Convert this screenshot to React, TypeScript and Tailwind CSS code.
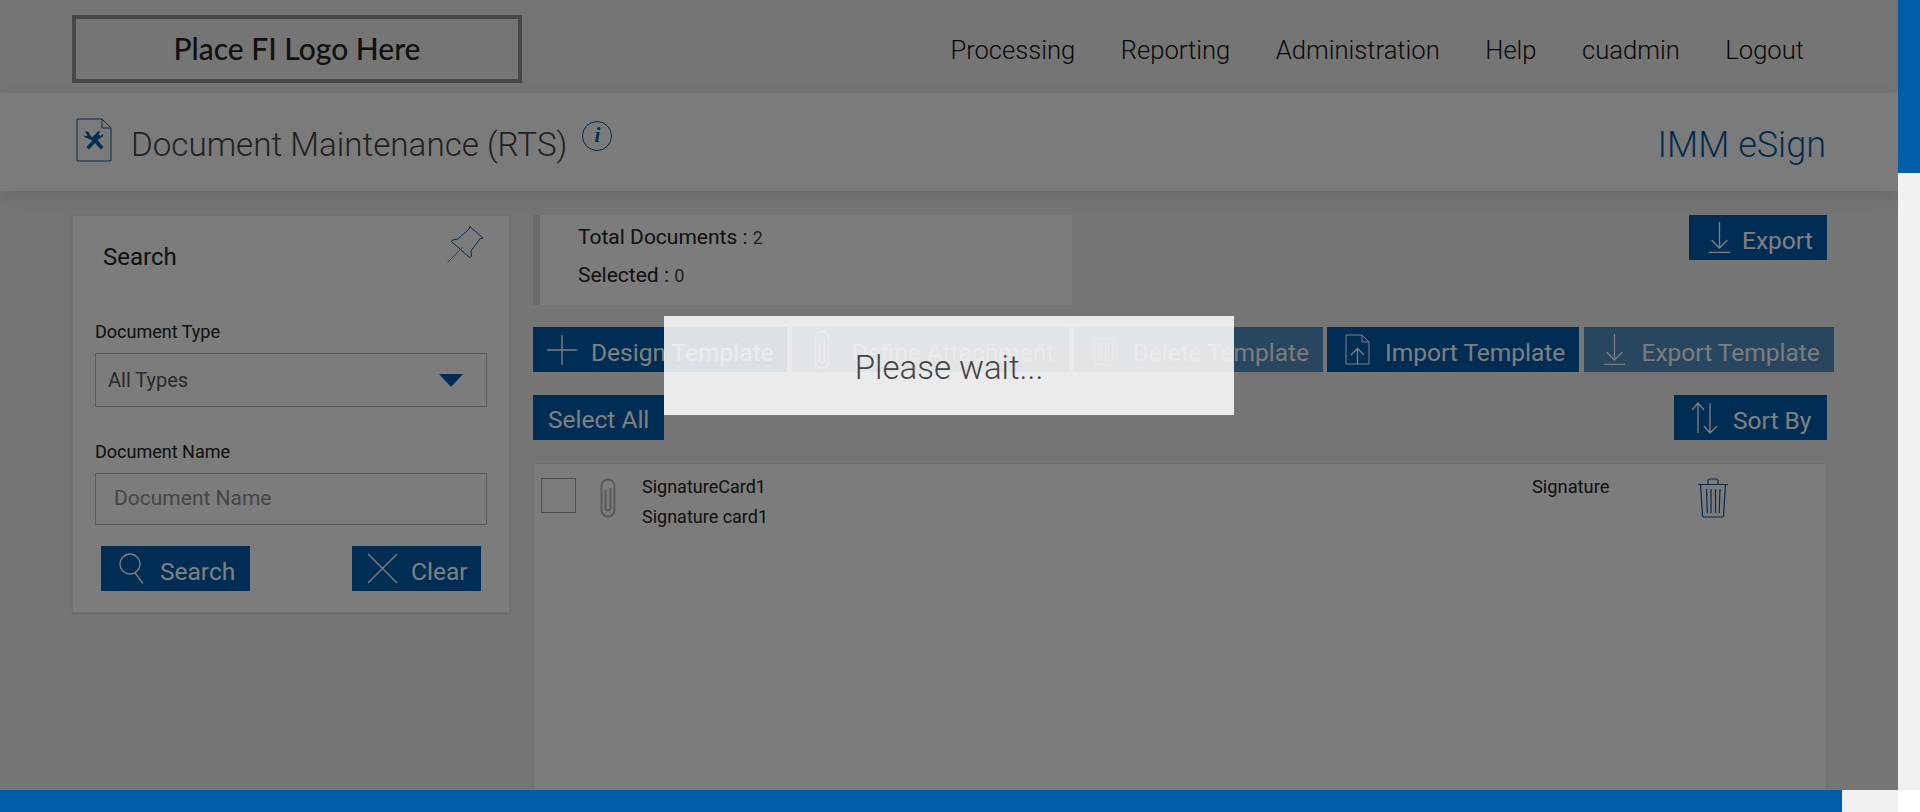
import React from "react";

const navItems = ["Processing", "Reporting", "Administration", "Help", "cuadmin", "Logout"];

function PlusIcon() {
  return (
    <svg width="32" height="32" viewBox="0 0 32 32" fill="none" stroke="currentColor" strokeWidth="1.3">
      <path d="M16 1v30M1 16h30" />
    </svg>
  );
}

function ClipIcon({ className, weight = 1.5 }: { className?: string; weight?: number }) {
  return (
    <svg width="16" height="40" viewBox="0 0 16 40" fill="none" stroke="currentColor" strokeWidth={weight} className={className}>
      <path d="M1.500 8a6.500 6.500 0 0 1 13 0v24a6.500 6.500 0 0 1-13 0z" />
      <path d="M5.500 12v18a2.500 2.500 0 0 0 5 0V10" />
    </svg>
  );
}

function TrashIcon({ className, size = 32 }: { className?: string; size?: number }) {
  return (
    <svg width={size} height={size * 1.25} viewBox="0 0 32 40" fill="none" stroke="currentColor" strokeWidth="1.2" className={className}>
      <path d="M1 6.500h30M11 6.500V3c0-1 .8-2 2-2h6c1.200 0 2 1 2 2v3.500M3.500 6.500l2 31c0 .8.800 1.500 1.500 1.500h18c.8 0 1.500-.7 1.500-1.500l2-31" />
      <path d="M9.500 11l.8 24M14 11v24M18.500 11v24M23 11l-.8 24" />
    </svg>
  );
}

function DownloadIcon() {
  return (
    <svg width="23" height="31" viewBox="0 0 23 31" fill="none" stroke="currentColor" strokeWidth="1.3">
      <path d="M11.500 0v26M3.500 18l8 8 8-8M1 30.400h21" />
    </svg>
  );
}

function DocUpIcon() {
  return (
    <svg width="25" height="31" viewBox="0 0 25 31" fill="none" stroke="currentColor" strokeWidth="1">
      <path d="M1 1h16l7 7v22H1zM17 1v7h7" />
      <path d="M12.500 30V15M6 21l6.500-6.500L19 21" strokeWidth="1.300" />
    </svg>
  );
}

function SortIcon() {
  return (
    <svg width="27" height="32" viewBox="0 0 27 32" fill="none" stroke="currentColor" strokeWidth="1.3">
      <path d="M7 31V1M1 8l6-7 6 7M19 1v30M13 24l6 7 7-7" />
    </svg>
  );
}

function SearchIcon() {
  return (
    <svg width="25" height="31" viewBox="0 0 25 31" fill="none" stroke="currentColor" strokeWidth="1.3">
      <circle cx="11" cy="11" r="10" />
      <path d="M16 20l8 10.500" />
    </svg>
  );
}

function CloseIcon() {
  return (
    <svg width="31" height="31" viewBox="0 0 31 31" fill="none" stroke="currentColor" strokeWidth="1.3">
      <path d="M1 1l29 29M30 1L1 30" />
    </svg>
  );
}

function PinIcon() {
  return (
    <svg width="37" height="37" viewBox="0 0 37 37" fill="none" stroke="#0a5a9e" strokeWidth="1">
      <path d="M0.500 36.500L16 21" strokeWidth="0.7" />
      <path d="M5.500 14l5.500-1 11-10 .8-2.500L36 12l-3 .8-9 12 .5 5.500-1.500 1.500L4.500 15.500z" />
    </svg>
  );
}

function DocToolIcon() {
  return (
    <svg width="36" height="44" viewBox="0 0 36 44" fill="none" className="ml-[4px] shrink-0">
      <path d="M1 1h25l9 9v33H1zM26 1v9h9" stroke="#0a5a9e" strokeWidth="1" />
      <path d="M9 14c2-1 4 0 4.500 2l2.500 3.500 5-5c.5-1 2-1.500 3.500-1l-2 2.500 2 2 2.500-2c.5 1.500 0 3-2 3.500l-3.500 2.500 6 7-2.500 2.500-6-6.500-6 6.500-2.500-2.500 6-6.500L11 20c-2 0-3.500-1.500-3.500-3l2.500 1.500 1.500-1.500z" fill="#005aa8" />
    </svg>
  );
}

function InfoIcon() {
  return (
    <div className="flex h-[30px] w-[30px] items-center justify-center rounded-full border border-[#0a5a9e] font-['Liberation_Serif',serif] text-[21px] font-bold italic text-[#005aa8]">
      i
    </div>
  );
}

function ActionButton({
  icon,
  label,
  className,
  gap,
}: {
  icon: React.ReactNode;
  label: string;
  className: string;
  gap: string;
}) {
  return (
    <div className={`flex h-[45px] shrink-0 items-center bg-[#005aa8] text-white ${className} ${gap}`}>
      <span className="flex shrink-0 items-center">{icon}</span>
      <span className="whitespace-nowrap pt-[8px] text-[24.500px] leading-none">{label}</span>
    </div>
  );
}

function SearchPanel() {
  return (
    <div className="h-[398px] w-[438px] shrink-0 border border-[#e2e2e2] bg-[#f8f8f8] shadow-sm">
      <div className="flex items-start justify-between pl-[30px] pr-[25px] pt-[10px]">
        <div className="pt-[16px] text-[24px] leading-[30px] text-[#222]">Search</div>
        <PinIcon />
      </div>
      <div className="px-[22px] pt-[48px]">
        <div className="text-[18px] leading-[24px] text-[#222]">Document Type</div>
        <div className="mt-[9px] flex h-[54px] items-center justify-between border border-[#b5b5b5] pl-[12px] pr-[23px] text-[20px] text-[#555]">
          <span>All Types</span>
          <div className="h-0 w-0 border-x-[12px] border-t-[13px] border-x-transparent border-t-[#005aa8]" />
        </div>
        <div className="mt-[33px] text-[18px] leading-[24px] text-[#222]">Document Name</div>
        <div className="mt-[9px] flex h-[52px] items-center border border-[#b5b5b5] pl-[18px] text-[21px] text-[#8c8c8c]">
          Document Name
        </div>
        <div className="mt-[21px] flex justify-between px-[6px]">
          <ActionButton icon={<SearchIcon />} label="Search" className="w-[149px] pl-[18px]" gap="gap-[16px]" />
          <ActionButton icon={<CloseIcon />} label="Clear" className="w-[129px] pl-[15px]" gap="gap-[13px]" />
        </div>
      </div>
    </div>
  );
}

function DocumentRow() {
  return (
    <div className="flex items-start pl-[7px] pt-[14px]">
      <div className="h-[35px] w-[35px] shrink-0 border border-[#9c9c9c] bg-[#f8f8f8]" />
      <ClipIcon className="ml-[24px] text-[#b5b5b5]" weight={2} />
      <div className="ml-[26px] w-[890px] shrink-0 text-[18px] leading-[30px] text-[#222]">
        <div className="-mt-[6px]">SignatureCard1</div>
        <div>Signature card1</div>
      </div>
      <div className="-mt-[6px] w-[165px] shrink-0 text-[18.300px] leading-[30px] text-[#222]">Signature</div>
      <TrashIcon className="text-[#0a5a9e]" />
    </div>
  );
}

function MainPage() {
  return (
    <div className="h-[900px] bg-[#eaeaea] font-['Roboto',sans-serif]">
      <header className="flex h-[93px] items-start justify-between bg-[#ebebeb] pl-[72px] pr-[94px]">
        <div className="mt-[15px] flex h-[68px] w-[450px] items-center justify-center border-[4px] border-[#909090] pb-[2px] font-['Lato',sans-serif] text-[30px] font-medium text-[#222]">
          Place FI Logo Here
        </div>
        <nav className="flex gap-[45.500px] pt-[31px] text-[25.600px] font-light text-[#111]">
          {navItems.map((item) => (
            <span key={item}>{item}</span>
          ))}
        </nav>
      </header>

      <div className="relative flex h-[98px] items-center justify-between bg-[#f6f6f6] px-[72px] shadow-[0_4px_20px_rgba(0,0,0,0.12)]">
        <div className="flex items-start">
          <DocToolIcon />
          <h1 className="ml-[19px] mt-[6px] text-[33.200px] font-light leading-[42px] text-[#444]">
            Document Maintenance (RTS)
          </h1>
          <div className="ml-[15px] mt-[3px]">
            <InfoIcon />
          </div>
        </div>
        <div className="pt-[6px] text-[36px] font-light text-[#0a5a9e]">IMM eSign</div>
      </div>

      <div className="flex gap-[23px] pl-[72px] pr-[71px] pt-[24px]">
        <SearchPanel />
        <div className="min-w-0 flex-1">
          <div className="flex items-start justify-between">
            <div className="h-[90px] w-[539px] border-l-[7px] border-[#d6d6d6] bg-[#f8f8f8] pl-[38px] pt-[4px] text-[21px] leading-[37.500px] text-[#222]">
              <div>
                Total Documents : <span className="text-[18px] text-[#444]">2</span>
              </div>
              <div>
                Selected : <span className="text-[18px] text-[#444]">0</span>
              </div>
            </div>
            <ActionButton icon={<DownloadIcon />} label="Export" className="w-[138px] pl-[19px]" gap="gap-[11px]" />
          </div>

          <div className="mt-[22px] flex gap-[4.500px]">
            <ActionButton icon={<PlusIcon />} label="Design Template" className="w-[254px] pl-[13px]" gap="gap-[13px]" />
            <ActionButton icon={<ClipIcon />} label="Define Attachment" className="w-[277.500px] pl-[22px] opacity-65" gap="gap-[22px]" />
            <ActionButton icon={<TrashIcon size={25} />} label="Delete Template" className="w-[249px] pl-[17px] opacity-65" gap="gap-[17px]" />
            <ActionButton icon={<DocUpIcon />} label="Import Template" className="w-[252px] pl-[18px]" gap="gap-[15px]" />
            <ActionButton icon={<DownloadIcon />} label="Export Template" className="w-[250px] pl-[19px] opacity-65" gap="gap-[16px]" />
          </div>

          <div className="mt-[23px] flex justify-between">
            <ActionButton icon={null} label="Select All" className="w-[131px] pb-[3px] pl-[15px]" gap="" />
            <ActionButton icon={<SortIcon />} label="Sort By" className="w-[153px] pl-[17px]" gap="gap-[15px]" />
          </div>

          <div className="mt-[23px] h-[500px] border border-[#dcdcdc] bg-[#f8f8f8]">
            <DocumentRow />
          </div>
        </div>
      </div>
    </div>
  );
}

export default function App() {
  return (
    <div className="flex h-[812px] w-[1920px] flex-col overflow-hidden bg-white">
      <div className="flex h-[790px] shrink-0">
        <div className="relative w-[1898px] shrink-0 overflow-hidden">
          <MainPage />
          {/* loading mask */}
          <div className="absolute inset-0 bg-black/50" />
          <div className="absolute left-[664px] top-[316px] h-[99px] w-[570px] bg-[#fcfcfc]/[0.875] pt-[27px] text-center font-['Roboto',sans-serif] text-[33px] font-light leading-[50px] text-[#444]">
            Please wait...
          </div>
        </div>
        <div className="w-[22px] bg-[#f1f1f1]">
          <div className="h-[173px] bg-[#005ea8]" />
        </div>
      </div>
      <div className="flex h-[22px] shrink-0">
        <div className="w-[1898px] bg-[#f1f1f1]">
          <div className="h-full w-[1842px] bg-[#005ea8]" />
        </div>
      </div>
    </div>
  );
}
